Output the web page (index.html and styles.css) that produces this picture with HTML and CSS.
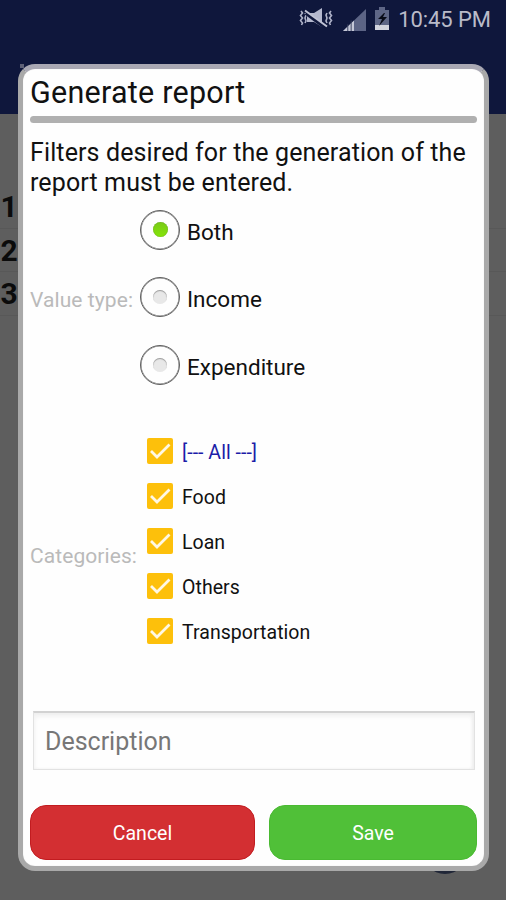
FILE: index.html
```html
<!DOCTYPE html>
<html lang="en">
<head>
<meta charset="utf-8">
<title>Generate report</title>
<link rel="stylesheet" href="styles.css">
</head>
<body>
<div class="screen">
  <header class="appbar">
    <div class="status">
      <svg class="mute" width="34" height="22" viewBox="0 0 34 22">
        <path d="M2 4l1.500 2-2 2.500 2 2.500-2 2.500 2 2.500-1 2M6 6l1 2-1 3 1 3-1 2M32 4l-1.500 2 2 2.500-2 2.500 2 2.500-2 2.500 1 2M28 6l-1 2 1 3-1 3 1 2" fill="none" stroke="#aeb2c8" stroke-width="1.6"/>
        <path d="M8 6h7l8-5v19l-8-5H8z" fill="#b4b8ce"/>
        <path d="M7 6l18 13.500" stroke="#0f173c" stroke-width="4"/>
        <path d="M6 3.500l22 16" stroke="#c0c3d5" stroke-width="2"/>
      </svg>
      <svg class="signal" width="23" height="23" viewBox="0 0 24 24">
        <path d="M0 24L24 1v23z" fill="#5c6485"/>
        <path d="M0 24L11.500 13v11z" fill="#c5c8d8"/>
        <path d="M5 17v7M8.500 13v11" stroke="#39415f" stroke-width="1"/>
      </svg>
      <svg class="battery" width="16" height="24" viewBox="0 0 16 24">
        <path d="M5 0h6v3h4v20H1V3h4z" fill="#5e6686"/>
        <path d="M1 18h14v5H1z" fill="#d2d4de"/>
        <path d="M10 6L4 12h4l-3 7 8-9H9l2-4z" fill="#080b18"/>
      </svg>
      <span class="clock">10:45 PM</span>
    </div>
  </header>
  <ol class="rows"><li>1</li><li>2</li><li>3</li></ol>
  <div class="fab"></div>
  <span class="nub"></span>
  <main class="dialog">
    <h1 class="title">Generate report</h1>
    <div class="rule"></div>
    <p class="intro">Filters desired for the generation of the<br>report must be entered.</p>
    <section class="group types">
      <span class="label">Value type:</span>
      <div class="radios">
        <div class="radio on"><i></i><span>Both</span></div>
        <div class="radio"><i></i><span>Income</span></div>
        <div class="radio"><i></i><span>Expenditure</span></div>
      </div>
    </section>
    <section class="group categories">
      <span class="label">Categories:</span>
      <div class="checks">
        <div class="check all"><svg viewBox="0 0 26 26"><path d="M4 13l6 6L22.500 6.500"/></svg><span>[--- All ---]</span></div>
        <div class="check"><svg viewBox="0 0 26 26"><path d="M4 13l6 6L22.500 6.500"/></svg><span>Food</span></div>
        <div class="check"><svg viewBox="0 0 26 26"><path d="M4 13l6 6L22.500 6.500"/></svg><span>Loan</span></div>
        <div class="check"><svg viewBox="0 0 26 26"><path d="M4 13l6 6L22.500 6.500"/></svg><span>Others</span></div>
        <div class="check"><svg viewBox="0 0 26 26"><path d="M4 13l6 6L22.500 6.500"/></svg><span>Transportation</span></div>
      </div>
    </section>
    <div class="field"><span>Description</span></div>
    <div class="actions">
      <div class="btn cancel"><span>Cancel</span></div>
      <div class="btn save"><span>Save</span></div>
    </div>
  </main>
</div>
</body>
</html>
```
FILE: styles.css
```css
* { box-sizing: border-box; }
body { margin: 0; font-family: Roboto, "Liberation Sans", sans-serif; color: #111; }
.screen { position: relative; width: 506px; height: 900px; overflow: hidden; background: #5e5e5e; }
.appbar { height: 114px; background: #0f173c; }
.status { display: flex; justify-content: flex-end; align-items: center; height: 38px; padding-right: 15px; }
.mute { margin-right: 10px; margin-top: -2px; }
.signal { margin-right: 8px; }
.battery { margin-right: 8px; margin-top: -1px; }
.clock { font-size: 22px; color: #b9bbc9; letter-spacing: -0.070px; padding-top: 1px; }
.rows { list-style: none; margin: 0; padding: 71px 0 0; }
.rows li { height: 43.500px; line-height: 44px; border-bottom: 1px solid #585858; padding-left: 0.500px; font-size: 30px; font-weight: 700; color: #0b0b0b; }
.fab { position: absolute; left: 422px; top: 828px; width: 46px; height: 46px; border-radius: 50%; background: #202637; }
.nub { position: absolute; left: 20px; top: 64px; width: 4px; height: 4px; background: #5d6076; }
.dialog { position: absolute; left: 18px; top: 64px; width: 471px; height: 807px; padding: 0 7px; display: flex; flex-direction: column; background: #fefefe; border: 5px solid #a9a9a9; border-top-color: #a9a8b3; border-radius: 17px; box-shadow: inset 0 0 1px #d5d5d5; }
.title { margin: 0; height: 46px; line-height: 47px; font-size: 30.500px; letter-spacing: 0.250px; font-weight: 400; white-space: nowrap; }
.rule { height: 7px; margin-top: 1px; border-radius: 4px; background: #b0b0b0; }
.intro { margin: 15px 0 0; height: 60px; line-height: 30px; font-size: 25px; letter-spacing: 0.120px; white-space: nowrap; }
.group { display: grid; grid-template-columns: 111px 1fr; }
.types { height: 202px; margin-top: -2px; }
.label { font-size: 21px; letter-spacing: 0.080px; color: #bababa; align-self: center; white-space: nowrap; }
.types .label { padding-top: 5px; }
.radios { margin-left: -1px; }
.radio { display: flex; align-items: center; gap: 7px; height: 67.500px; }
.radio i { width: 40px; height: 40px; border: 1.500px solid #606060; border-radius: 50%; display: grid; place-items: center; box-shadow: inset 0 0 0 0.500px #777; }
.radio i::before { content: ""; width: 14px; height: 14px; border-radius: 50%; background: #e8e8e8; box-shadow: inset 0 1px 1px #999; }
.radio.on i::before { width: 15px; height: 15px; background: linear-gradient(#79ca18, #85e408); box-shadow: inset 0 0 1px #588c20; }
.radio span { font-size: 22.500px; padding-top: 4px; }
.categories { margin-top: 30px; height: 248px; }
.categories .label { padding-top: 7px; }
.checks { padding: 0 0 0 6px; }
.check { display: flex; align-items: center; gap: 9px; height: 45px; font-size: 19.500px; letter-spacing: 0.040px; white-space: nowrap; }
.check svg { width: 26px; height: 26px; border-radius: 2px; background: #fdc00b; }
.check path { fill: none; stroke: #fff8e5; stroke-width: 2.800; }
.check.all { color: #1c1ca8; }
.check span { padding-top: 3px; }
.field { margin: 35px 2px 0 3px; height: 59px; border: 1px solid #e2e2e2; border-top: 2px solid #d2d2d2; box-shadow: inset 0 3px 5px #eee, inset -2px 0 3px #f0f0f0; padding-left: 11px; line-height: 58px; font-size: 25px; color: #777; }
.actions { display: grid; grid-template-columns: 225px 208px; gap: 14px; margin-top: 35px; }
.btn { height: 55px; border-radius: 16px; text-align: center; font-size: 19.500px; color: #fff; }
.cancel { background: #d32f32; border: 1px solid #c21c20; line-height: 55px; }
.save { background: #50c038; border: 1px solid #4aba32; line-height: 55px; }
```
